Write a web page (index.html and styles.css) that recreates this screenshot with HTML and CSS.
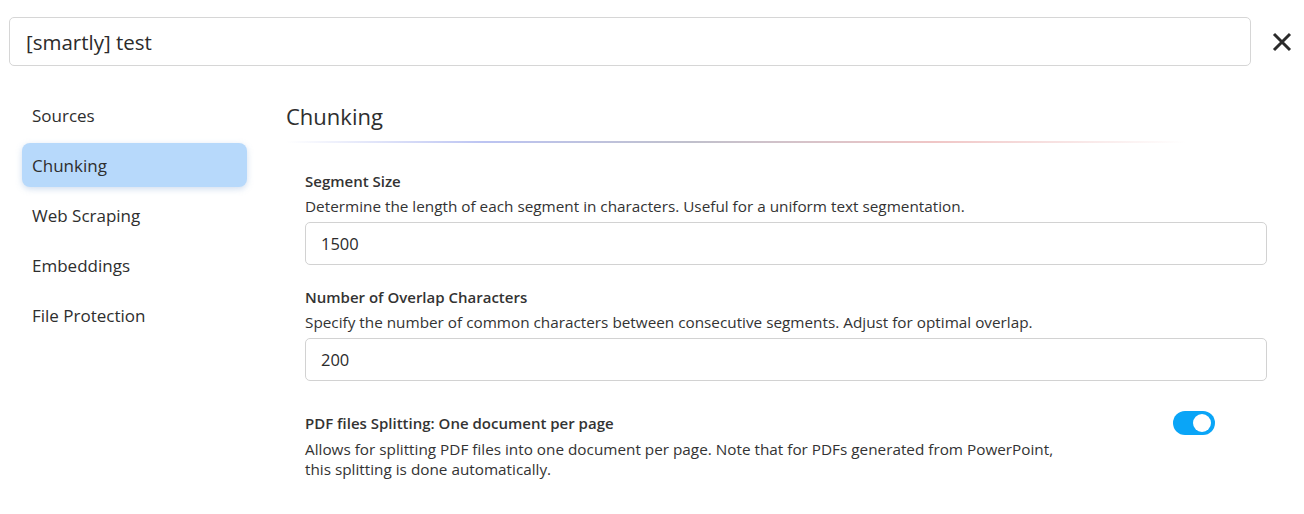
FILE: index.html
```html
<!DOCTYPE html>
<html>
<head>
<meta charset="utf-8">
<link rel="stylesheet" href="styles.css">
</head>
<body>
<div class="page">
  <div class="topbar">
    <div class="title-input">[smartly] test</div>
    <button class="close" aria-label="Close">
      <svg width="20" height="20" viewBox="0 0 20 20"><path d="M2 2 L18 18 M18 2 L2 18" stroke="#2b2b2b" stroke-width="3" stroke-linecap="butt"/></svg>
    </button>
  </div>
  <div class="body">
    <nav class="sidebar">
      <div class="nav-item">Sources</div>
      <div class="nav-item active">Chunking</div>
      <div class="nav-item">Web Scraping</div>
      <div class="nav-item">Embeddings</div>
      <div class="nav-item">File Protection</div>
    </nav>
    <main class="content">
      <h2 class="heading">Chunking</h2>
      <div class="divider"></div>
      <div class="fields">
        <div class="field">
          <div class="label">Segment Size</div>
          <div class="desc">Determine the length of each segment in characters. Useful for a uniform text segmentation.</div>
          <div class="input">1500</div>
        </div>
        <div class="field">
          <div class="label">Number of Overlap Characters</div>
          <div class="desc">Specify the number of common characters between consecutive segments. Adjust for optimal overlap.</div>
          <div class="input">200</div>
        </div>
        <div class="field toggle-field">
          <div class="toggle-text">
            <div class="label">PDF files Splitting: One document per page</div>
            <div class="desc">Allows for splitting PDF files into one document per page. Note that for PDFs generated from PowerPoint, this splitting is done automatically.</div>
          </div>
          <div class="switch"><span class="knob"></span></div>
        </div>
      </div>
    </main>
  </div>
</div>
</body>
</html>
```

FILE: styles.css
```css
* { box-sizing: border-box; }
html, body { margin: 0; padding: 0; background: #fff; }
body {
  font-family: "Open Sans", "Noto Sans", "Liberation Sans", sans-serif;
  color: #333;
}
.page { padding: 17px 0 0 9px; width: 1304px; }
.topbar { display: flex; align-items: center; }
.title-input {
  width: 1242px;
  height: 49px;
  border: 1px solid #d6d6d6;
  border-radius: 5px;
  padding: 0 16px;
  display: flex;
  align-items: center;
  font-size: 20.5px;
  font-weight: 500;
  color: #2b2b2b;
}
.close {
  border: 0; background: none; padding: 0;
  margin-left: 21px;
  width: 20px; height: 20px;
  display: flex;
}
.body { display: flex; margin-top: 27px; }
.sidebar { width: 238px; padding-left: 13px; display: flex; flex-direction: column; gap: 6px; }
.nav-item {
  height: 44px;
  padding: 0 10px;
  display: flex; align-items: center;
  font-size: 17px;
  font-weight: 500;
  color: #2e2e2e;
  border-radius: 8px;
}
.nav-item.active {
  background: #b7d9fb;
  box-shadow: 0 2px 6px rgba(120,160,210,0.35);
}
.content { margin-left: 39px; width: 981px; }
.heading {
  margin: 0;
  height: 44px;
  padding-top: 3px;
  padding-bottom: 1px;
  display: flex; align-items: center;
  font-size: 22px;
  font-weight: 500;
  color: #2e2e2e;
}
.divider {
  height: 2px;
  margin-top: 4px;
  width: 900px;
  background: linear-gradient(90deg, rgba(200,205,245,0) 0%, #bcc4f2 22%, #c0c0cc 45%, #f0c6c6 72%, rgba(245,215,215,0) 100%);
}
.fields { padding-left: 19px; padding-top: 28px; display: flex; flex-direction: column; gap: 22px; }
.field { display: flex; flex-direction: column; }
.label { font-size: 15px; font-weight: 600; color: #333; line-height: 20px; }
.desc { font-size: 15.3px; color: #333; line-height: 20px; margin-top: 5px; }
.input {
  margin-top: 6px;
  height: 43px;
  border: 1px solid #d2d2d2;
  border-radius: 5px;
  padding: 0 15px;
  display: flex; align-items: center;
  font-size: 16.5px;
  color: #2b2b2b;
}
.toggle-field { flex-direction: row; justify-content: space-between; align-items: flex-start; margin-top: 10px; width: 910px; }
.toggle-text { width: 765px; }
.toggle-text .desc { line-height: 19.5px; margin-top: 7px; }
.switch {
  width: 42px; height: 24px;
  border-radius: 12px;
  background: #0aa5f7;
  position: relative;
  margin-top: -2px;
}
.knob {
  position: absolute;
  right: 4px; top: 3px;
  width: 18px; height: 18px;
  border-radius: 50%;
  background: #fff;
}
```
